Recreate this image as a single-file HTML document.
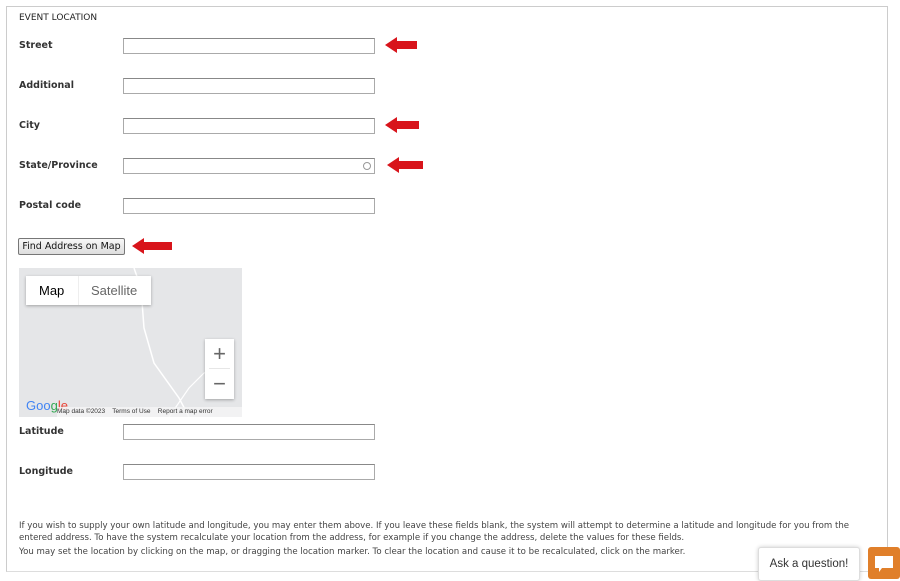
<!DOCTYPE html>
<html><head><style>
body{margin:0;width:900px;height:576px;background:#fff;font-family:"DejaVu Sans","Liberation Sans",sans-serif;color:#222;position:relative;overflow:hidden}
.box{position:absolute;left:6px;top:6px;width:880px;height:564px;border:1px solid #ccc;border-bottom:1px solid #ddd}
.lbl{position:absolute;left:19px;font-size:9.5px;font-weight:bold;color:#333}
.in{position:absolute;left:123px;width:250px;height:14px;border:1px solid #aaa;border-top-color:#888;background:#fff}
.arr{position:absolute;width:32px;height:16px}
.t{position:absolute;left:19px;font-size:8.6px;color:#444;line-height:11.5px;width:845px}
</style></head><body>
<div class="box"></div>
<div class="lbl" style="top:13px;font-weight:normal;font-size:9px;color:#222">EVENT LOCATION</div>
<div class="lbl" style="top:40px">Street</div><div class="in" style="top:38px"></div>
<div class="lbl" style="top:80px">Additional</div><div class="in" style="top:78px"></div>
<div class="lbl" style="top:120px">City</div><div class="in" style="top:118px"></div>
<div class="lbl" style="top:160px">State/Province</div><div class="in" style="top:158px"><div style="position:absolute;right:3px;top:3px;width:6px;height:6px;border:1px solid #999;border-radius:50%"></div></div>
<div class="lbl" style="top:200px">Postal code</div><div class="in" style="top:198px"></div>
<div style="position:absolute;left:18px;top:238px;width:105px;height:15px;border:1px solid #777;border-radius:2px;background:linear-gradient(#f8f8f8,#ddd);font-size:9.5px;text-align:center;line-height:15px;color:#111">Find Address on Map</div>
<svg class="arr" style="left:385px;top:37px" viewBox="0 0 32 16"><path d="M0 8 L12 0 L12 4 L32 4 L32 12 L12 12 L12 16Z" fill="#d8141b"/></svg>
<svg class="arr" style="left:385px;top:117px;width:34px" viewBox="0 0 34 16"><path d="M0 8 L12 0 L12 4 L34 4 L34 12 L12 12 L12 16Z" fill="#d8141b"/></svg>
<svg class="arr" style="left:387px;top:157px;width:36px" viewBox="0 0 36 16"><path d="M0 8 L12 0 L12 4 L36 4 L36 12 L12 12 L12 16Z" fill="#d8141b"/></svg>
<svg class="arr" style="left:132px;top:238px;width:40px" viewBox="0 0 40 16"><path d="M0 8 L12 0 L12 4 L40 4 L40 12 L12 12 L12 16Z" fill="#d8141b"/></svg>
<div style="position:absolute;left:19px;top:268px;width:223px;height:149px;background:#e5e6e8;overflow:hidden;font-family:'Liberation Sans',sans-serif">
<svg style="position:absolute;left:0;top:0" width="223" height="149"><path d="M115 0 L122 20 L125 60 L135 95 L160 130 L170 149" stroke="#fff" stroke-width="1.5" fill="none"/><path d="M150 149 L170 120 L185 105 L200 100" stroke="#fff" stroke-width="1.2" fill="none"/></svg>
<div style="position:absolute;left:7px;top:8px;width:125px;height:29px;background:#fff;box-shadow:0 1px 3px rgba(0,0,0,.3);font-size:13px;line-height:29px"><span style="position:absolute;left:13px;color:#000">Map</span><span style="position:absolute;left:52px;top:0;width:1px;height:29px;background:#eee"></span><span style="position:absolute;left:65px;color:#666">Satellite</span></div>
<div style="position:absolute;left:186px;top:71px;width:29px;height:60px;background:#fff;box-shadow:0 1px 3px rgba(0,0,0,.3);color:#666;text-align:center;font-size:22px;line-height:29px"><div>+</div><div style="border-top:1px solid #e6e6e6;margin:0 4px">−</div></div>
<div style="position:absolute;left:7px;top:130px;font-size:13px;color:#4285f4">Goo<span style="color:#34a853">g</span><span style="color:#ea4335">le</span></div>
<div style="position:absolute;left:38px;top:139px;width:185px;height:10px;background:rgba(245,245,245,.8);font-size:6.5px;line-height:10px;color:#333">Map data ©2023 &nbsp;&nbsp; Terms of Use &nbsp;&nbsp; Report a map error</div>
</div>
<div class="lbl" style="top:426px">Latitude</div><div class="in" style="top:424px"></div>
<div class="lbl" style="top:466px">Longitude</div><div class="in" style="top:464px"></div>
<div class="t" style="top:521px">If you wish to supply your own latitude and longitude, you may enter them above. If you leave these fields blank, the system will attempt to determine a latitude and longitude for you from the entered address. To have the system recalculate your location from the address, for example if you change the address, delete the values for these fields.</div>
<div class="t" style="top:547px">You may set the location by clicking on the map, or dragging the location marker. To clear the location and cause it to be recalculated, click on the marker.</div>
<div style="position:absolute;left:758px;top:547px;width:100px;height:32px;background:#fff;border:1px solid #ddd;border-radius:3px;box-shadow:0 0 4px rgba(0,0,0,.2);font-size:11.5px;line-height:32px;text-align:center;color:#333;font-family:'Liberation Sans',sans-serif">Ask a question!</div>
<div style="position:absolute;left:868px;top:547px;width:32px;height:32px;background:#e07f2a;border-radius:3px"><svg width="32" height="29" viewBox="0 0 32 29"><path d="M7 9 H25 V21 H14 L11 25 V21 H7Z" fill="#fff"/></svg></div>
</body></html>
